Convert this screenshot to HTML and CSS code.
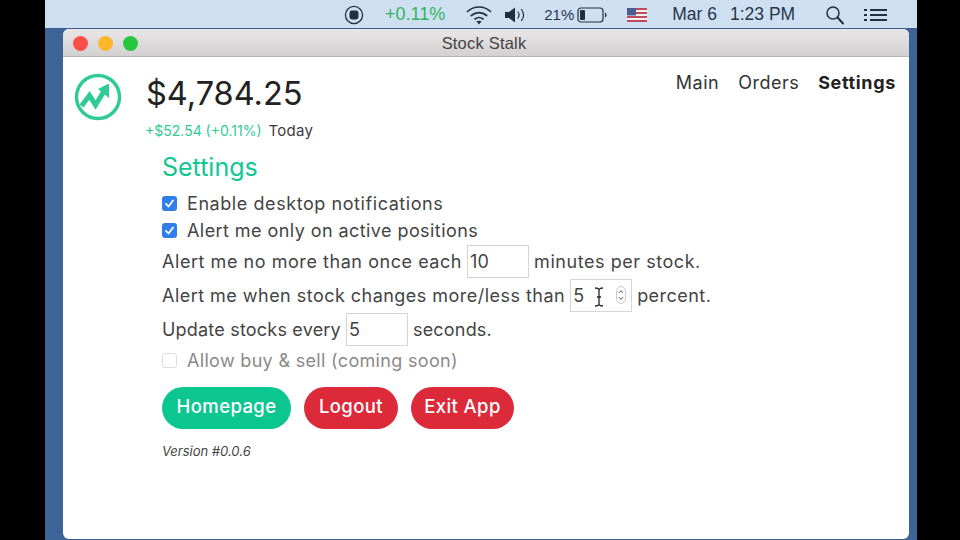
FILE: index.html
```html
<!DOCTYPE html>
<html lang="en">
<head>
<meta charset="utf-8">
<title>Stock Stalk</title>
<link rel="stylesheet" href="styles.css">
</head>
<body>
<div class="screen">
  <div class="menubar">
    <svg class="mb-record" width="20" height="20" viewBox="0 0 20 20"><circle cx="10" cy="10" r="8.6" fill="none" stroke="#1f3044" stroke-width="1.3"/><rect x="5.5" y="5.5" width="9" height="9" rx="2.4" fill="#1f3044"/></svg>
    <span class="mb-stock">+0.11%</span>
    <svg class="mb-wifi" width="26" height="22" viewBox="0 0 26 22" fill="none" stroke="#1f3044" stroke-width="1.7" stroke-linecap="round"><path d="M1.5 7.5C8 1.5 18 1.5 24.5 7.5"/><path d="M5.3 11.5C9.8 7.6 16.2 7.6 20.7 11.5"/><path d="M9 15C11.4 13.2 14.6 13.2 17 15"/><path d="M13 20.5l-2.6-3.2c1.6-.9 3.6-.9 5.2 0z" fill="#1f3044" stroke="none"/></svg>
    <svg class="mb-vol" width="22" height="18" viewBox="0 0 22 18"><path d="M1 6h4l6-4.5v15L5 12H1z" fill="#1f3044"/><path d="M14 6c1.300 1.800 1.300 4.200 0 6M17.500 3.500c2.500 3.300 2.500 7.700 0 11" fill="none" stroke="#1f3044" stroke-width="1.200" stroke-linecap="round"/></svg>
    <span class="mb-text mb-pct">21%</span>
    <svg class="mb-batt" width="30" height="16" viewBox="0 0 30 16"><rect x="1" y="1" width="25" height="14" rx="3" fill="none" stroke="#1f3044" stroke-width="1.200"/><rect x="3" y="3" width="5" height="10" rx="1" fill="#1f3044"/><path d="M28 5.500c1 .3 1.500 1.300 1.500 2.500s-.5 2.200-1.500 2.500z" fill="#1f3044"/></svg>
    <svg class="mb-flag" width="20" height="14" viewBox="0 0 20 14"><rect width="20" height="14" fill="#f3eef0"/><path d="M0 1h20M0 5h20M0 9h20M0 13h20" stroke="#bf4a5e" stroke-width="2"/><rect width="9" height="7.500" fill="#4c5b92"/></svg>
    <span class="mb-text mb-date">Mar 6</span>
    <span class="mb-text mb-time">1:23 PM</span>
    <svg class="mb-search" width="20" height="20" viewBox="0 0 20 20" fill="none" stroke="#1f3044" stroke-width="1.500" stroke-linecap="round"><circle cx="8" cy="8" r="6"/><path d="M12.500 12.500L18 18.500" stroke-width="2"/></svg>
    <svg class="mb-list" width="24" height="14" viewBox="0 0 24 14" fill="#1f3044"><rect x="0" y="1" width="3" height="2"/><rect x="0" y="6" width="3" height="2"/><rect x="0" y="11" width="3" height="2"/><rect x="6" y="1" width="17" height="2"/><rect x="6" y="6" width="17" height="2"/><rect x="6" y="11" width="17" height="2"/></svg>
  </div>

  <div class="window">
    <div class="titlebar">
      <div class="lights">
        <span class="light light-red"></span>
        <span class="light light-yellow"></span>
        <span class="light light-green"></span>
      </div>
      <span class="title">Stock Stalk</span>
    </div>

    <div class="content">
      <header class="top">
        <svg class="logo" width="48" height="48" viewBox="0 0 48 48" fill="none"><circle cx="24" cy="24" r="21.500" stroke="#2fcb95" stroke-width="3.400"/><path d="M7.500 33L15.500 22.500 21.500 32 31 16.500" stroke="#2fcb95" stroke-width="5" stroke-linejoin="miter"/><path d="M24 16L35 10.500 35 25z" fill="#2fcb95"/></svg>
        <div class="summary">
          <div class="price">$4,784.25</div>
          <div class="change"><span class="gain">+$52.54 (+0.11%)</span> <span class="today">Today</span></div>
        </div>
        <nav class="nav">
          <a class="nav-link">Main</a>
          <a class="nav-link">Orders</a>
          <a class="nav-link active">Settings</a>
        </nav>
      </header>

      <section class="settings">
        <h1 class="heading">Settings</h1>
        <div class="row row-check row-notify">
          <span class="check on"><svg width="11" height="11" viewBox="0 0 11 11" fill="none" stroke="#fff" stroke-width="1.800" stroke-linecap="round" stroke-linejoin="round"><path d="M2 5.800L4.500 8.500 9 2.500"/></svg></span>
          <label>Enable desktop notifications</label>
        </div>
        <div class="row row-check row-second">
          <span class="check on"><svg width="11" height="11" viewBox="0 0 11 11" fill="none" stroke="#fff" stroke-width="1.800" stroke-linecap="round" stroke-linejoin="round"><path d="M2 5.800L4.500 8.500 9 2.500"/></svg></span>
          <label>Alert me only on active positions</label>
        </div>
        <div class="row row-input row-a">
          <span>Alert me no more than once each</span>
          <input class="field" type="text" value="10">
          <span>minutes per stock.</span>
        </div>
        <div class="row row-input row-b">
          <span>Alert me when stock changes more/less than</span>
          <span class="field-wrap">
            <input class="field" type="text" value="5">
            <svg class="spinner" width="10" height="18" viewBox="0 0 10 18" fill="none" stroke="#666" stroke-width="1"><rect x=".5" y=".5" width="9" height="17" rx="4.500" stroke="#ccc"/><path d="M3 7l2-2.500L7 7M3 11l2 2.500L7 11"/></svg>
            <svg class="ibeam" width="10" height="20" viewBox="0 0 10 20" fill="none" stroke="#222" stroke-width="1.300"><path d="M1 1c2 0 3.500.5 4 1.500C5.500 1.500 7 1 9 1M5 2.500v15M1 19c2 0 3.500-.5 4-1.500C5.500 18.500 7 19 9 19M3 10h4"/></svg>
          </span>
          <span>percent.</span>
        </div>
        <div class="row row-input row-update">
          <span>Update stocks every</span>
          <input class="field" type="text" value="5">
          <span>seconds.</span>
        </div>
        <div class="row row-check row-disabled">
          <span class="check off"></span>
          <label>Allow buy &amp; sell (coming soon)</label>
        </div>
        <div class="buttons">
          <button class="btn btn-green btn-home" type="button">Homepage</button>
          <button class="btn btn-red btn-logout" type="button">Logout</button>
          <button class="btn btn-red btn-exit" type="button">Exit App</button>
        </div>
        <p class="version">Version #0.0.6</p>
      </section>
    </div>
  </div>
</div>
</body>
</html>
```
FILE: styles.css
```css
* { box-sizing: border-box; }
html, body { margin: 0; padding: 0; }
body {
  width: 960px;
  height: 540px;
  overflow: hidden;
  background: #000;
  font-family: Inter, "Liberation Sans", sans-serif;
  color: #444;
}
.screen {
  width: 872px;
  height: 540px;
  margin-left: 45px;
  background: #3c6496;
  display: flex;
  flex-direction: column;
}
.menubar {
  flex: none;
  height: 29px;
  background: #cfdff2;
  border-bottom: 1px solid #3d5f8e;
  display: flex;
  align-items: center;
  font-family: "Liberation Sans", sans-serif;
  color: #25364a;
  padding: 1px 0 0 299px;
}
.menubar svg { flex: none; }
.mb-text { font-size: 15px; white-space: nowrap; }
.mb-stock { margin-left: 21px; font-size: 18px; color: #2fb560; white-space: nowrap; }
.mb-wifi { margin-left: 21px; }
.mb-vol { margin-left: 12px; }
.mb-pct { margin-left: 18px; }
.mb-batt { margin-left: 3px; }
.mb-flag { margin-left: 20px; }
.mb-date { margin-left: 25px; font-size: 17.500px; }
.mb-time { margin-left: 13px; font-size: 17.500px; }
.mb-search { margin-left: 30px; }
.mb-list { margin-left: 19px; }

.window {
  flex: 1;
  margin: 0 8px 1px 18px;
  background: #fff;
  border-radius: 6px;
  overflow: hidden;
  display: flex;
  flex-direction: column;
}
.titlebar {
  flex: none;
  height: 28px;
  background: linear-gradient(#e8e6e7, #d2d0d1);
  border-bottom: 1px solid #b5b3b4;
  position: relative;
  display: flex;
  align-items: center;
  justify-content: center;
  padding-top: 1px;
}
.lights {
  position: absolute;
  left: 10px;
  top: 7px;
  display: flex;
  gap: 10px;
}
.light { width: 15px; height: 15px; border-radius: 50%; }
.light-red { background: #fb5049; }
.light-yellow { background: #fdb62c; }
.light-green { background: #27c63f; }
.title {
  font-family: "Liberation Sans", sans-serif;
  font-size: 16.500px;
  letter-spacing: .2px;
  color: #444;
  margin-left: -4px;
}

.content { flex: 1; padding: 16px 13px 0 11px; }
.top { display: flex; align-items: flex-start; }
.logo { flex: none; }
.summary { margin-left: 24px; padding-top: 1px; }
.price {
  font-size: 32.500px;
  line-height: 40px;
  color: #222;
  font-weight: 400;
  white-space: nowrap;
}
.change { margin: 7px 0 0 -1px; font-size: 14px; line-height: 20px; white-space: nowrap; }
.gain { color: #2fcb95; }
.today { color: #3d3d3d; margin-left: 3px; font-size: 15px; letter-spacing: .3px; }
.nav { margin-left: auto; margin-top: -1px; display: flex; gap: 19px; }
.nav-link { font-size: 18px; line-height: 22px; letter-spacing: .5px; color: #333; }
.nav-link.active { font-weight: 700; letter-spacing: .65px; color: #222; }

.settings { margin-left: 88px; margin-top: 10px; }
.heading {
  margin: 0 0 8px;
  font-size: 25px;
  line-height: 32px;
  font-weight: 400;
  color: #12c694;
}
.row { display: flex; align-items: center; font-size: 18px; letter-spacing: .45px; white-space: nowrap; }
.row-check { height: 24px; gap: 10px; }
.row-notify { letter-spacing: .57px; }
.row-second { margin-top: 3px; letter-spacing: .43px; }
.row-input { height: 34px; gap: 5px; }
.row-a { margin-top: 2px; letter-spacing: .55px; }
.row-b { letter-spacing: .47px; }
.row-update { letter-spacing: .2px; }
.row-disabled { color: #8a8a8a; margin-top: 2px; letter-spacing: .32px; }
.check {
  flex: none;
  width: 15px;
  height: 15px;
  border-radius: 3px;
  display: flex;
  align-items: center;
  justify-content: center;
}
.check.on { background: #2f7eea; }
.check.off { background: #fff; border: 1px solid #dcdcdc; }
.field {
  width: 62px;
  height: 33px;
  border: 1px solid #d5d5d5;
  background: #fff;
  padding: 0 2px;
  font: inherit;
  color: #444;
  outline: none;
}
.field-wrap { position: relative; display: flex; }
.spinner { position: absolute; left: 46px; top: 7px; }
.ibeam { position: absolute; left: 24px; top: 8px; }
.buttons { display: flex; gap: 13px; margin-top: 15px; }
.btn {
  height: 42px;
  border: none;
  border-radius: 21px;
  color: #fff;
  font: inherit;
  font-size: 18.500px;
  letter-spacing: .4px;
  font-weight: 500;
  padding: 0 0 5px;
}
.btn-green { background: #0cc68f; }
.btn-red { background: #dc2a3a; }
.btn-home { width: 129px; }
.btn-logout { width: 94px; }
.btn-exit { width: 103px; }
.version {
  margin: 13px 0 0;
  font-size: 13px;
  line-height: 18px;
  font-style: italic;
  color: #444;
}
```
